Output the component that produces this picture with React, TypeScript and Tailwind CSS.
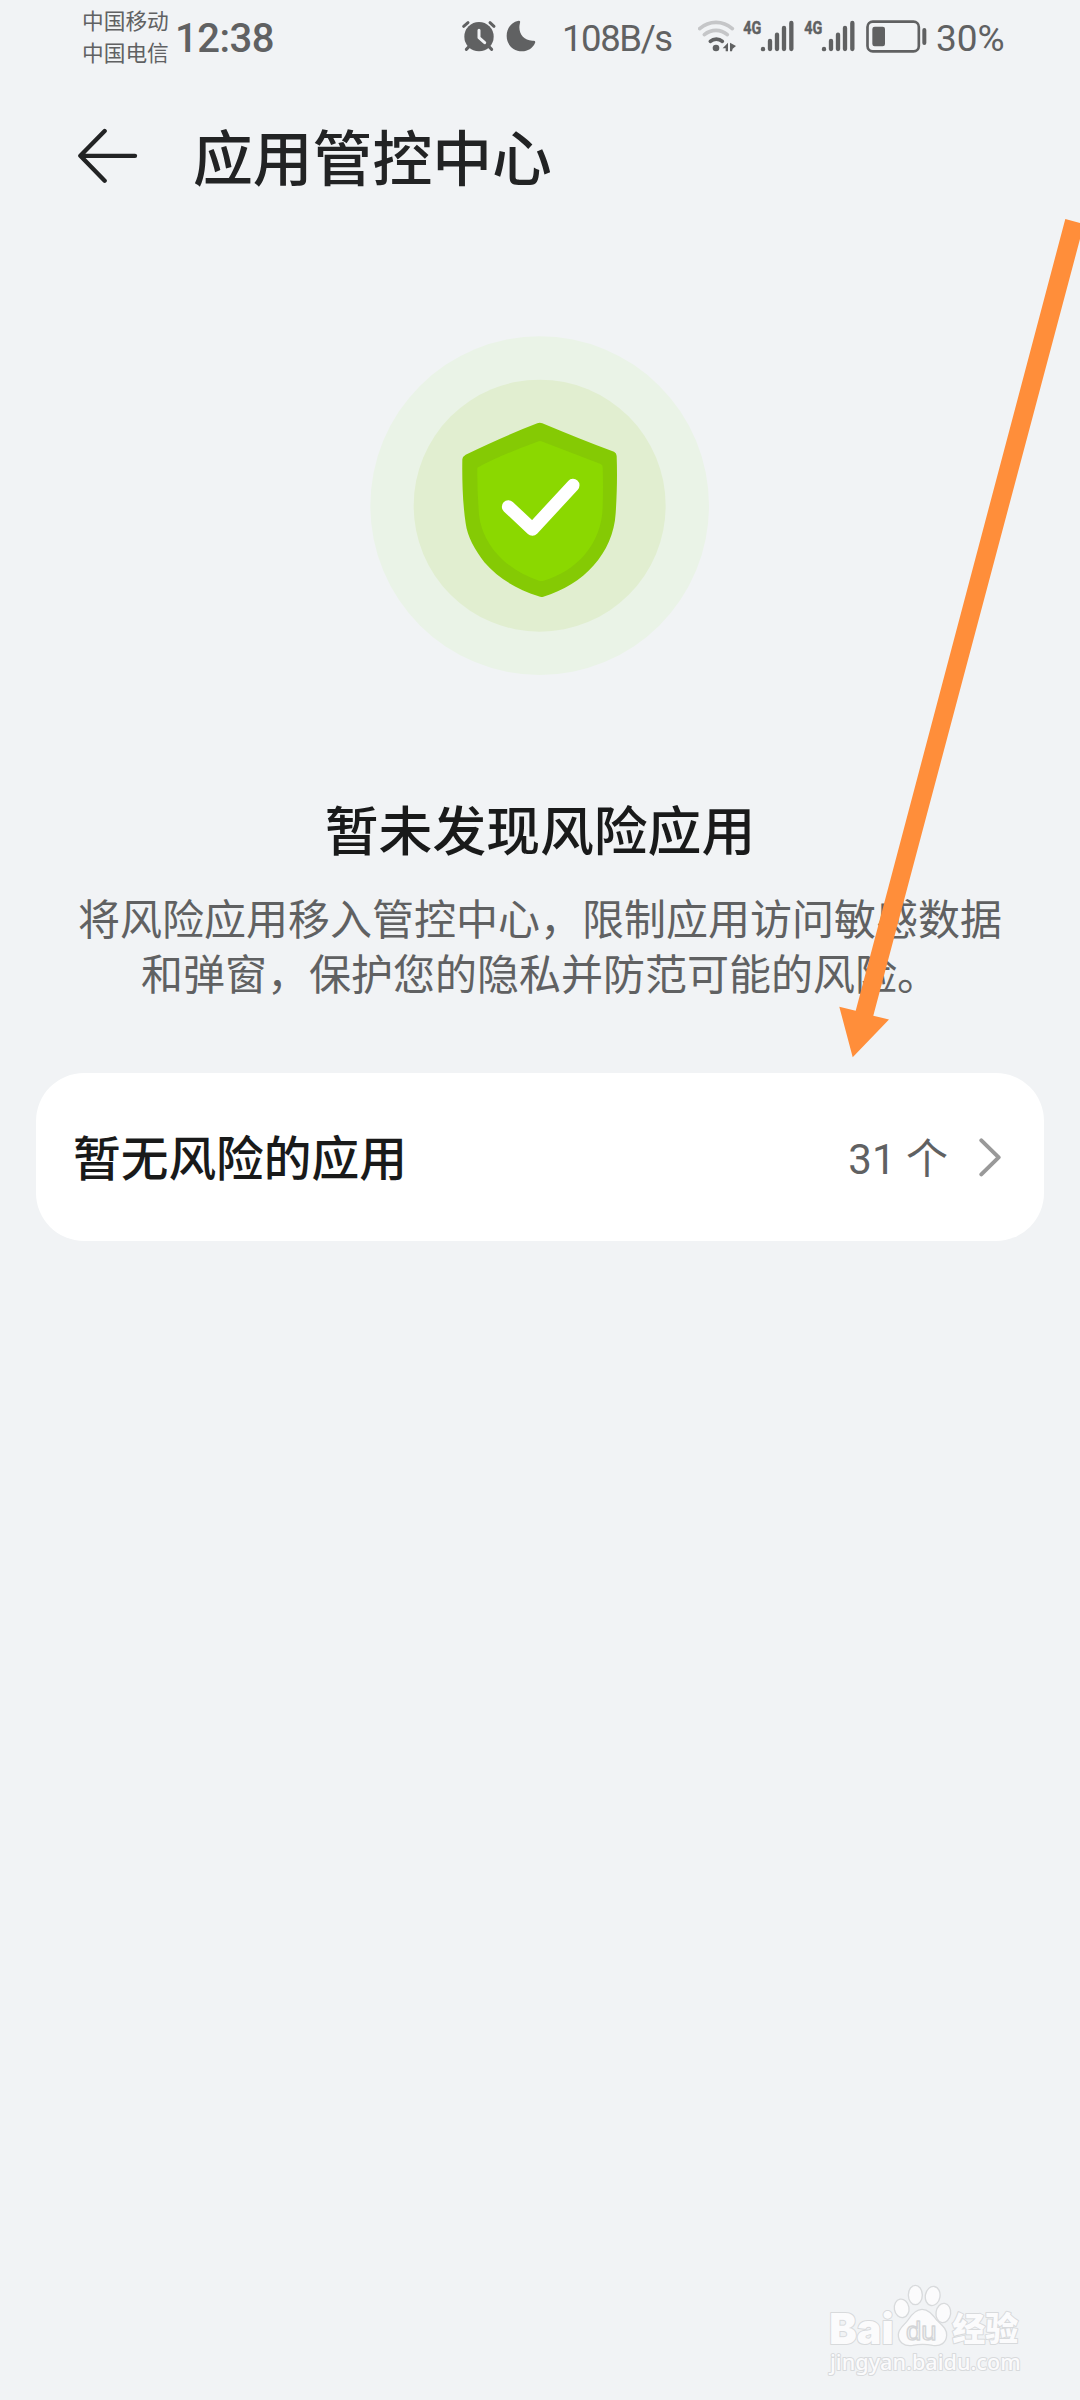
import React from 'react';

const AlarmIcon = () => (
  <svg viewBox="63 60 108 96" className="w-[36px] h-[32px] shrink-0" fill="none" strokeLinecap="round" strokeLinejoin="round">
    <circle cx="117" cy="110" r="44" fill="#606162" />
    <path d="M71 79 L84 68 M150 68 L162 79" stroke="#606162" strokeWidth="9" />
    <path d="M79 148 L90 137 M144 137 L155 148" stroke="#606162" strokeWidth="9" />
    <path d="M117 91 V113 L134 128" stroke="#f1f3f5" strokeWidth="9" />
  </svg>
);

const MoonIcon = () => (
  <svg viewBox="198 60 90 96" className="w-[30px] h-[32px] shrink-0" fill="#606162">
    <path d="M236 62 Q242 62 240 68 C232 98 250 124 280 122 Q288 122 285 129 C278 145 263 154 246 154 C220 154 200 134 200 108 C200 85 214 66 236 62 Z" />
  </svg>
);

const WifiIcon = () => (
  <svg viewBox="54 60 114 96" className="w-[38px] h-[32px] shrink-0" fill="none" strokeLinecap="round">
    <path d="M59 86 C88 61 128 61 157 86" stroke="#c5c6c8" strokeWidth="11" />
    <path d="M73 104 C94 87 122 87 142 104" stroke="#c5c6c8" strokeWidth="11" />
    <path d="M91 124 C101 115 117 115 127 124" stroke="#606162" strokeWidth="11" />
    <circle cx="108" cy="144" r="10" fill="#606162" />
    <path d="M144 128 V154 H137 V145 H128 Z M150 128 L168 138 L158 146 L156 154 H150 Z" fill="#606162" />
  </svg>
);

const SignalIcon = () => (
  <svg viewBox="189 42 156 114" className="w-[52px] h-[38px] -mt-[6px] shrink-0">
    <text x="190" y="103" textLength="54" lengthAdjust="spacingAndGlyphs" fontSize="57" className="font-bold font-['Roboto']" fill="#606162" stroke="#606162" strokeWidth="1.5">4G</text>
    <g stroke="#606162" strokeWidth="13" strokeLinecap="round">
      <path d="M249 147.500 V147" />
      <path d="M270 147 V123" />
      <path d="M291 147 V104" />
      <path d="M312 147 V84" />
      <path d="M334 147 V69" />
    </g>
  </svg>
);

const BatteryIcon = () => (
  <svg viewBox="558 60 183 99" className="w-[61px] h-[33px] shrink-0" fill="none">
    <rect x="562.500" y="65" width="154" height="89" rx="16" stroke="#606162" strokeWidth="8" />
    <rect x="577" y="80" width="38" height="59" rx="7" fill="#606162" />
    <path d="M733 90 V129" stroke="#606162" strokeWidth="12" strokeLinecap="round" />
  </svg>
);

const StatusBar = () => (
  <div className="flex h-20 pl-[82px] text-[#606162]">
    <div className="w-[93px] pt-[4px] text-[21.7px] leading-[32px] whitespace-nowrap">
      <div>中国移动</div>
      <div>中国电信</div>
    </div>
    <div className="w-[286px] pt-[15px] text-[40px] leading-[48px] tracking-[-0.5px] font-medium font-['Roboto']">12:38</div>
    <div className="flex items-start pt-5">
      <AlarmIcon />
      <div className="ml-[9px]"><MoonIcon /></div>
      <span className="ml-[26px] w-[136px] -mt-[5px] text-[36.5px] leading-[48px] tracking-[-1.4px] font-['Roboto']">108B/s</span>
      <WifiIcon />
      <div className="ml-[7px]"><SignalIcon /></div>
      <div className="ml-[9px]"><SignalIcon /></div>
      <div className="ml-[10px]"><BatteryIcon /></div>
      <span className="ml-[9px] -mt-[5px] text-[37px] leading-[48px] font-['Roboto']">30%</span>
    </div>
  </div>
);

const ShieldBadge = () => (
  <svg viewBox="60 48 1020 1020" className="w-[340px] h-[340px]">
    <circle cx="569" cy="557" r="508" fill="#eaf3e7" />
    <circle cx="569" cy="557" r="378" fill="#e1eed0" />
    <path
      d="M562 310 Q569 307 577 310 C650 341 720 369 792 395 Q800 399 800 408 C802 465 801 520 797 580 C790 700 700 795 580 830 Q573 832 566 829 C500 808 445 775 403 727 C375 690 352 650 347 610 C338 550 336 480 337 418 Q338 409 347 404 Q470 345 562 310 Z"
      fill="#85ca04"
    />
    <path
      d="M562 365 Q570 361 578 365 L752 432 Q758 435 758 442 Q760 500 758 560 C756 670 680 754 581 782 Q574 784 567 782 C470 752 390 670 386 570 Q381 500 382 443 Q450 406 562 365 Z"
      fill="#8bd800"
    />
    <path d="M475 560 L547 628 L669 496" fill="none" stroke="#fff" strokeWidth="39" strokeLinecap="round" strokeLinejoin="round" />
  </svg>
);

const Watermark = () => (
  <svg viewBox="0 0 690 360" className="w-[230px] h-[120px]" fill="#fbfbfc" stroke="#d8dadc" strokeWidth="6" strokeLinejoin="round">
    <g paintOrder="stroke">
      <text x="58" y="223" textLength="193" lengthAdjust="spacingAndGlyphs" fontSize="128" className="font-black font-['Inter']">Bai</text>
      <text x="427" y="214" textLength="198" lengthAdjust="spacingAndGlyphs" fontSize="98" className="font-black">经验</text>
      <text x="60" y="300" textLength="572" lengthAdjust="spacingAndGlyphs" fontSize="64" className="font-medium font-['Noto_Sans']">jingyan.baidu.com</text>
    </g>
    <g strokeWidth="4">
      <ellipse cx="275" cy="115" rx="22" ry="28" transform="rotate(-10 275 115)" />
      <ellipse cx="316" cy="75" rx="21" ry="29" />
      <ellipse cx="368" cy="78" rx="22" ry="29" transform="rotate(10 368 78)" />
      <ellipse cx="400" cy="129" rx="22" ry="29" transform="rotate(8 400 129)" />
      <path d="M336 118 C355 118 368 135 380 150 C396 166 411 176 410 196 C409 218 392 230 368 226 Q338 220 308 226 C282 230 264 216 265 193 C266 174 284 165 294 150 C305 133 318 118 336 118 Z" />
      <text x="288" y="210" textLength="92" lengthAdjust="spacingAndGlyphs" fontSize="80" className="font-['Liberation_Sans']" fill="#f3f4f5" stroke="#d3d5d7">du</text>
    </g>
  </svg>
);

export default function App() {
  return (
    <div className="relative flex flex-col w-[1080px] h-[2400px] overflow-hidden bg-[#f1f3f5] font-['Noto_Sans_CJK_SC',sans-serif]">
      <StatusBar />

      {/* Header */}
      <header className="flex items-start h-40 pl-[77px] pt-[48px] text-[#222324]">
        <svg viewBox="51 54 186 168" className="w-[62px] h-[56px]" fill="none" stroke="#222324" strokeWidth="13" strokeLinecap="round" strokeLinejoin="round">
          <path d="M134 63 L61 137 L134 212 M63 137.500 H225" />
        </svg>
        <h1 className="-mt-[13px] ml-[54px] text-[59.800px] leading-[80px] font-medium">应用管控中心</h1>
      </header>

      {/* Scan result */}
      <section className="flex flex-col items-center pt-[96px]">
        <ShieldBadge />
        <h2 className="mt-[112px] text-[53.8px] leading-[80px] font-medium text-[#191a1a]">暂未发现风险应用</h2>
        <p className="mt-[21px] text-center text-[42px] leading-[55px] text-[#606162] whitespace-nowrap">
          将风险应用移入管控中心，限制应用访问敏感数据
          <br />
          和弹窗，保护您的隐私并防范可能的风险。
        </p>
      </section>

      <div className="mx-9 mt-[74px] flex items-center h-[168px] pl-[37px] pr-[42px] rounded-[48px] bg-white">
        <span className="flex-1 -mt-[2px] text-[47.700px] leading-[70px] font-medium text-[#191a1a]">暂无风险的应用</span>
        <span className="mt-[5px] text-[42px] leading-[60px] text-[#606162] font-['Roboto','Noto_Sans_CJK_SC',sans-serif]">31 个</span>
        <svg viewBox="594 230 72 120" className="ml-[30px] w-[24px] h-[40px]" fill="none" stroke="#999" strokeWidth="12" strokeLinecap="round" strokeLinejoin="round">
          <path d="M604 240 L656 291 L604 342" />
        </svg>
      </div>

      {/* Pointer drawn over the page */}
      <svg viewBox="0 0 1080 2400" className="absolute inset-0 w-full h-full pointer-events-none" fill="#ff8e3a">
        <path d="M1065.300 219 L1084 224 L873.300 1015.700 L889 1019.500 L852.700 1057.300 L839.300 1006.700 L855.700 1010.700 Z" />
      </svg>

      <div className="absolute left-[810px] top-[2270px]">
        <Watermark />
      </div>
    </div>
  );
}
